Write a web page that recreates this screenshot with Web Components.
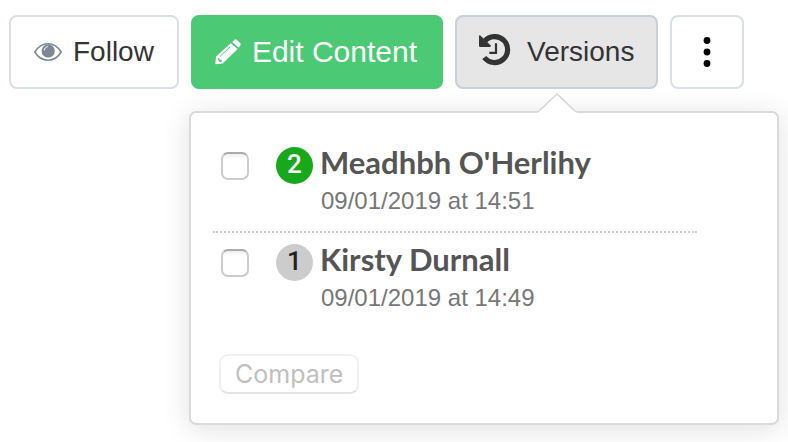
<!DOCTYPE html>
<html lang="en">
<head>
<meta charset="utf-8">
<meta name="viewport" content="width=device-width, initial-scale=1">
<title>Versions</title>
<style>
  body {
    margin: 0;
    background: #fff;
    color: #333;
    font-family: "Liberation Sans", Arial, sans-serif;
    font-size: 28px;
  }
</style>
</head>
<body>
<content-toolbar>
  <tool-button>
    <svg slot="icon" width="28" height="20" viewBox="0 0 28 20" aria-hidden="true">
      <path d="M.9 10C4 4.600 8.700 1.700 14 1.700S24 4.600 27.100 10C24 15.400 19.300 18.200 14 18.200S4 15.400.9 10Z" fill="none" stroke="#7b8794" stroke-width="1.600"/>
      <circle cx="14.200" cy="9" r="6.600" fill="#7b8794"/>
      <path d="M10.300 8C10.400 6.300 11.700 5 13.400 4.700" fill="none" stroke="#fff" stroke-width="1" stroke-linecap="round"/>
    </svg>
    Follow
  </tool-button>
  <tool-button variant="primary">
    <svg slot="icon" width="26" height="26" viewBox="0 0 26 26" aria-hidden="true">
      <path fill="#fff" d="M1 17.600 15.700 4.200 22.600 10.100 7.700 24.500.3 25.300Z"/>
      <path fill="#fff" d="M17.200 2.900 19.600.8Q20.800-.1 22 .9L25.100 4Q26.300 5.300 25.200 6.600L23.700 8.800Z"/>
      <path d="M5.200 17.300 15.100 7.800" stroke="#4bc974" stroke-width="1"/>
      <path fill="#4bc974" d="M2.700 20 4.100 18.900 4.500 20.600 6.600 20.900 6.900 22.500 4.600 23.100Z"/>
    </svg>
    Edit Content
  </tool-button>
  <tool-button variant="active">
    <svg slot="icon" width="32" height="32" viewBox="0 0 32 32" aria-hidden="true">
      <path d="M5.600 7.300A13 13 0 1 1 5.300 23.500" fill="none" stroke="#333" stroke-width="5.200"/>
      <path fill="#333" d="M0 2.600Q0 .5 1.600 1.800L11.500 11.200Q12.500 12.900 10.700 13H1.300Q0 13 0 11.800Z"/>
      <path d="M17 9.200V18.800H10.300" fill="none" stroke="#333" stroke-width="2.200"/>
    </svg>
    Versions
  </tool-button>
  <tool-button variant="compact" label="More actions">
    <svg slot="icon" width="8" height="32" viewBox="0 0 8 32" aria-hidden="true">
      <circle cx="4" cy="4.500" r="3.400"/>
      <circle cx="4" cy="16" r="3.400"/>
      <circle cx="4" cy="27.500" r="3.400"/>
    </svg>
  </tool-button>
</content-toolbar>

<versions-popover>
  <version-item number="2" current>
    Meadhbh O'Herlihy
    <span slot="date">09/01/2019 at 14:51</span>
  </version-item>
  <version-item number="1">
    Kirsty Durnall
    <span slot="date">09/01/2019 at 14:49</span>
  </version-item>
</versions-popover>

<script>
class ContentToolbar extends HTMLElement {
  connectedCallback() {
    this.attachShadow({ mode: 'open' });
    this.shadowRoot.innerHTML = `
      <style>
        :host {
          display: flex;
          gap: 12px;
          padding: 15px 9px 0;
        }
      </style>
      <slot></slot>
    `;
  }
}
customElements.define('content-toolbar', ContentToolbar);

class ToolButton extends HTMLElement {
  connectedCallback() {
    const label = this.getAttribute('label');
    this.attachShadow({ mode: 'open' });
    this.shadowRoot.innerHTML = `
      <style>
        :host {
          display: block;
        }
        button {
          display: flex;
          align-items: center;
          gap: 11px;
          box-sizing: border-box;
          height: 74px;
          padding: 0 23px;
          border: 2px solid #d9dfe4;
          border-radius: 8px;
          background: #fff;
          color: inherit;
          font: inherit;
          white-space: nowrap;
          cursor: pointer;
        }
        :host([variant="primary"]) button {
          padding: 0 24px 0 22px;
          border-color: #4bc974;
          background: #4bc974;
          color: #fff;
          font-size: 30px;
        }
        :host([variant="active"]) button {
          gap: 16px;
          padding: 0 22px;
          border-color: #c8d0d9;
          background: #e6e6e6;
        }
        :host([variant="active"]) ::slotted(svg) {
          margin-bottom: 4px;
        }
        :host([variant="compact"]) button {
          justify-content: center;
          width: 74px;
          padding: 0;
          color: #000;
        }
        ::slotted(svg) {
          display: block;
          flex: none;
        }
      </style>
      <button type="button"${label ? ` aria-label="${label}"` : ''}>
        <slot name="icon"></slot>
        ${label ? '' : '<span><slot></slot></span>'}
      </button>
    `;
  }
}
customElements.define('tool-button', ToolButton);

class VersionItem extends HTMLElement {
  connectedCallback() {
    const number = this.getAttribute('number');
    this.attachShadow({ mode: 'open' });
    this.shadowRoot.innerHTML = `
      <style>
        :host {
          display: block;
          height: 95px;
          border-bottom: 2px dotted #ccc;
        }
        :host(:last-of-type) {
          border-bottom: 0;
        }
        label {
          display: flex;
          align-items: flex-start;
          padding: 8px 8px 0;
        }
        input {
          appearance: none;
          flex: none;
          box-sizing: border-box;
          width: 28px;
          height: 28px;
          margin: 8px 27px 0 0;
          border: 2px solid #ccc;
          border-top-color: #aaa;
          border-radius: 7px;
          background: linear-gradient(#eee, #fff 5px);
        }
        input:checked {
          background: #18a81c;
        }
        .badge {
          flex: none;
          width: 37px;
          height: 37px;
          margin: 3px 7px 0 0;
          border-radius: 50%;
          background: #ccc;
          color: #222;
          font: 500 26px/35px Roboto, sans-serif;
          text-align: center;
        }
        :host([current]) .badge {
          background: #18a81c;
          color: #fff;
        }
        .name {
          display: block;
          color: #555;
          font: 700 31px/36px Lato, sans-serif;
        }
        .date {
          display: block;
          padding-left: 1px;
          color: #777;
          font-size: 24px;
          line-height: 42px;
        }
      </style>
      <label>
        <input type="checkbox">
        <span class="badge">${number}</span>
        <span>
          <span class="name"><slot></slot></span>
          <span class="date"><slot name="date"></slot></span>
        </span>
      </label>
    `;
  }
}
customElements.define('version-item', VersionItem);

class VersionsPopover extends HTMLElement {
  connectedCallback() {
    this.attachShadow({ mode: 'open' });
    this.shadowRoot.innerHTML = `
      <style>
        :host {
          display: block;
          position: relative;
          margin: 22px 9px 17px 189px;
          padding: 23px 28px 29px 22px;
          border: 2px solid #dadada;
          border-radius: 7px;
          background: #fff;
          box-shadow: 0 4px 28px rgba(0, 0, 0, 0.13);
        }
        .arrow {
          position: absolute;
          left: 346px;
          bottom: 100%;
          display: block;
        }
        .list {
          margin-right: 52px;
        }
        button {
          box-sizing: border-box;
          height: 40px;
          margin: 26px 0 0 6px;
          padding: 0 14px;
          border: 2px solid #f0f0f0;
          border-bottom-color: #e4e4e4;
          border-radius: 9px;
          background: #fff;
          color: #bfbfbf;
          font: 400 25px/34px Inter, sans-serif;
          display: block;
        }
      </style>
      <svg class="arrow" width="40" height="20" viewBox="0 0 40 20" aria-hidden="true">
        <path fill="#fff" d="M0 20 20 1 40 20Z"/>
        <path fill="none" stroke="#d6d6d6" stroke-width="1.500" d="M1 19 20 1 39 19"/>
      </svg>
      <div class="list"><slot></slot></div>
      <button type="button" disabled>Compare</button>
    `;
  }
}
customElements.define('versions-popover', VersionsPopover);
</script>
</body>
</html>
